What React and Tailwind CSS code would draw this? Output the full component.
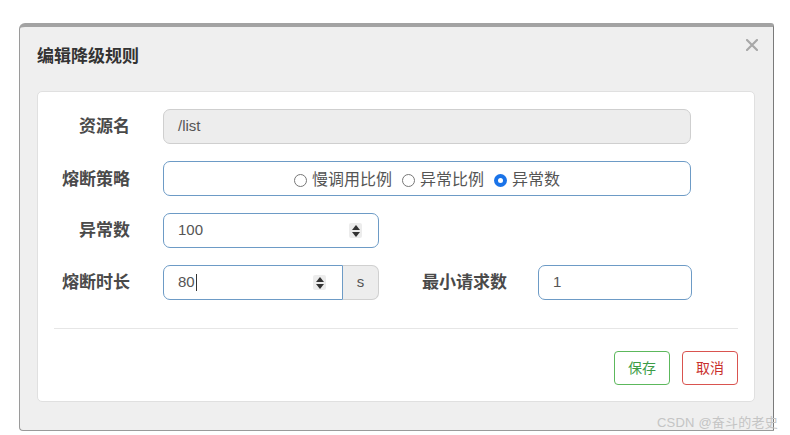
import React from 'react';

function Spinner() {
  return (
    <span className="flex flex-col items-center justify-center gap-[2px] w-[13px] h-[15px] bg-[#ececec] rounded-[2px]">
      <svg width="8" height="5" viewBox="0 0 8 5"><path d="M4 0 L8 5 L0 5 Z" fill="#333" /></svg>
      <svg width="8" height="5" viewBox="0 0 8 5"><path d="M0 0 L8 0 L4 5 Z" fill="#333" /></svg>
    </span>
  );
}

function Radio({ label, checked }) {
  return (
    <label className="flex items-center gap-[5px]">
      {checked ? (
        <span className="w-[13px] h-[13px] rounded-full bg-[#1a73e8] flex items-center justify-center">
          <span className="w-[5px] h-[5px] rounded-full bg-white" />
        </span>
      ) : (
        <span className="w-[13px] h-[13px] rounded-full border border-[#777] bg-white" />
      )}
      <span>{label}</span>
    </label>
  );
}

const labelCls = 'w-[76px] shrink-0 text-right text-[17px] font-bold text-[#4a4a4a]';
const blueInput = 'h-[35px] rounded-[7px] border border-[#6d9bc6] bg-white flex items-center';

export default function App() {
  return (
    <div
      className="relative w-[790px] h-[435px] bg-white overflow-hidden"
      style={{ fontFamily: '"Liberation Sans", "Noto Sans CJK SC", sans-serif' }}
    >
      <div className="ml-[19px] mt-[23px] w-[755px] h-[408px] bg-[#efefef] border-t-4 border-t-[#a3a3a3] border-l border-l-[#9a9a9a] border-r border-r-[#7a7a7a] border-b border-b-[#9a9a9a] rounded-tl-[6px] rounded-tr-[3px] rounded-bl-[4px] flex flex-col">
        <div className="h-[64px] flex items-start justify-between pl-[17px] pr-[15px] pt-[15px]">
          <h4 className="text-[17px] font-bold text-[#333]" style={{ lineHeight: '22px', marginTop: '4px' }}>编辑降级规则</h4>
          <svg width="12" height="12" viewBox="0 0 12 12" className="-mt-[3px]">
            <path d="M1 1 L11 11 M11 1 L1 11" stroke="#a8a8a8" strokeWidth="2.2" strokeLinecap="round" />
          </svg>
        </div>
        <div className="ml-[17px] w-[718px] h-[311px] bg-white border border-[#e0e0e0] rounded-[5px] px-[16px] pt-[17px] flex flex-col">
          <div className="flex flex-col gap-[17px]">
            <div className="flex items-center">
              <div className={labelCls}>资源名</div>
              <div className="ml-[33px] w-[528px] h-[35px] rounded-[7px] border border-[#cfcfcf] bg-[#ededed] flex items-center pl-[14px] text-[15px] text-[#555]">/list</div>
            </div>
            <div className="flex items-center">
              <div className={`${labelCls} pt-[3px]`}>熔断策略</div>
              <div className={`ml-[33px] w-[528px] ${blueInput} justify-center gap-[10px] pt-[3px] text-[16px] text-[#555]`}>
                <Radio label="慢调用比例" />
                <Radio label="异常比例" />
                <Radio label="异常数" checked />
              </div>
            </div>
            <div className="flex items-center">
              <div className={labelCls}>异常数</div>
              <div className={`ml-[33px] w-[216px] ${blueInput} justify-between pl-[14px] pr-[16px] text-[15px] text-[#555]`}>
                <span>100</span>
                <Spinner />
              </div>
            </div>
            <div className="flex items-center">
              <div className={labelCls}>熔断时长</div>
              <div className="ml-[33px] w-[216px] h-[35px] flex">
                <div className="flex-1 h-full rounded-l-[7px] border border-[#6d9bc6] bg-white flex items-center justify-between pl-[14px] pr-[16px] text-[15px] text-[#555]">
                  <span className="flex items-center">80<span className="ml-[1px] w-px h-[17px] bg-[#333]" /></span>
                  <Spinner />
                </div>
                <div className="w-[36px] h-full rounded-r-[7px] border border-l-0 border-[#d0d0d0] bg-[#ededed] flex items-center justify-center text-[15px] text-[#555]">s</div>
              </div>
              <div className="ml-[42px] w-[86px] text-right text-[17px] font-bold text-[#4a4a4a]">最小请求数</div>
              <div className={`ml-[31px] w-[154px] ${blueInput} pl-[14px] text-[15px] text-[#555]`}>1</div>
            </div>
          </div>
          <div className="mt-[28px] h-px bg-[#e6e6e6]" />
          <div className="mt-[22px] flex justify-end gap-[12px]">
            <button className="w-[56px] h-[34px] rounded-[4px] border border-[#5cb85c] text-[#3d9d46] text-[14px] bg-white">保存</button>
            <button className="w-[56px] h-[34px] rounded-[4px] border border-[#d9534f] text-[#c9302c] text-[14px] bg-white">取消</button>
          </div>
        </div>
      </div>
      <div className="absolute left-[657px] top-[413px] text-[13px] text-[#c4c4c4] tracking-[0.2px]">CSDN @奋斗的老史</div>
    </div>
  );
}
